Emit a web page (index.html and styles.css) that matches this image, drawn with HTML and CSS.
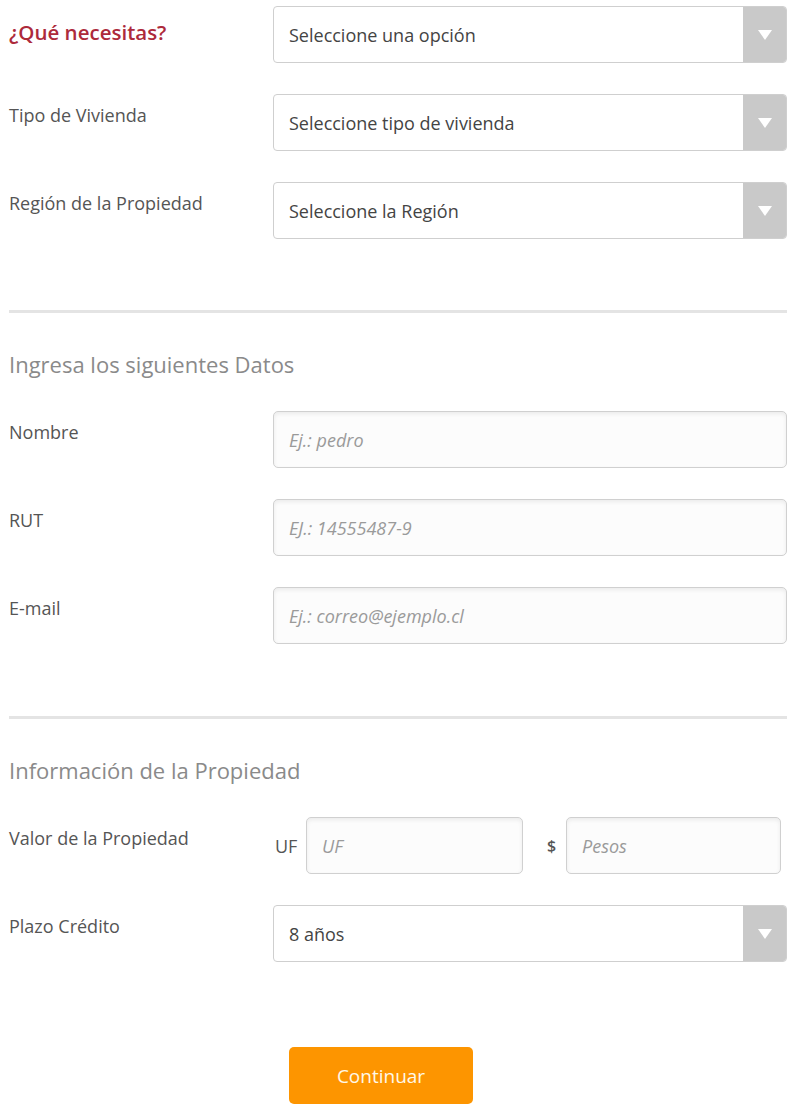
FILE: index.html
```html
<!DOCTYPE html>
<html lang="es">
<head>
<meta charset="utf-8">
<title>Formulario</title>
<link rel="stylesheet" href="styles.css">
</head>
<body>
<form class="form">
  <div class="row first">
    <label class="lbl lbl-red">¿Qué necesitas?</label>
    <div class="select"><span class="select-text">Seleccione una opción</span><span class="select-btn"><svg width="14" height="10" viewBox="0 0 14 10"><path d="M0 0H14L7 10Z" fill="#fff"/></svg></span></div>
  </div>
  <div class="row">
    <label class="lbl">Tipo de Vivienda</label>
    <div class="select"><span class="select-text">Seleccione tipo de vivienda</span><span class="select-btn"><svg width="14" height="10" viewBox="0 0 14 10"><path d="M0 0H14L7 10Z" fill="#fff"/></svg></span></div>
  </div>
  <div class="row">
    <label class="lbl">Región de la Propiedad</label>
    <div class="select"><span class="select-text">Seleccione la Región</span><span class="select-btn"><svg width="14" height="10" viewBox="0 0 14 10"><path d="M0 0H14L7 10Z" fill="#fff"/></svg></span></div>
  </div>

  <hr class="sep">
  <h2 class="heading">Ingresa los siguientes Datos</h2>

  <div class="row">
    <label class="lbl">Nombre</label>
    <div class="input"><span class="ph">Ej.: pedro</span></div>
  </div>
  <div class="row">
    <label class="lbl">RUT</label>
    <div class="input"><span class="ph">EJ.: 14555487-9</span></div>
  </div>
  <div class="row">
    <label class="lbl">E-mail</label>
    <div class="input"><span class="ph">Ej.: correo@ejemplo.cl</span></div>
  </div>

  <hr class="sep sep2">
  <h2 class="heading">Información de la Propiedad</h2>

  <div class="row">
    <label class="lbl">Valor de la Propiedad</label>
    <div class="pair">
      <span class="unit unit-uf">UF</span>
      <div class="input input-uf"><span class="ph">UF</span></div>
      <span class="unit unit-peso">$</span>
      <div class="input input-peso"><span class="ph">Pesos</span></div>
    </div>
  </div>
  <div class="row">
    <label class="lbl">Plazo Crédito</label>
    <div class="select"><span class="select-text">8 años</span><span class="select-btn"><svg width="14" height="10" viewBox="0 0 14 10"><path d="M0 0H14L7 10Z" fill="#fff"/></svg></span></div>
  </div>

  <div class="actions">
    <button type="button" class="btn">Continuar</button>
  </div>
</form>
</body>
</html>
```

FILE: styles.css
```css
* { box-sizing: border-box; }
html, body { margin: 0; padding: 0; background: #fff; }
body {
  font-family: "Open Sans", "Noto Sans", sans-serif;
  font-size: 18px;
  color: #555;
}
.form {
  width: 778px;
  margin-left: 9px;
  padding-top: 6px;
}
.row {
  display: flex;
  align-items: flex-start;
  height: 57px;
  margin-bottom: 31px;
}
.lbl {
  width: 264px;
  flex: none;
  padding-top: 9px;
  line-height: 24px;
  font-size: 18px;
  color: #555;
}
.lbl-red {
  color: #ad2a3b;
  font-weight: 600;
  font-size: 20.5px;
  padding-top: 14px;
}
.select {
  flex: 1;
  height: 57px;
  display: flex;
  align-items: stretch;
  border: 1px solid #cfcfcf;
  border-radius: 4px;
  overflow: hidden;
  background: #fff;
}
.select-text {
  flex: 1;
  display: flex;
  align-items: center;
  padding-left: 15px;
  font-size: 18px;
  color: #444;
}
.select-btn {
  width: 43px;
  flex: none;
  background: #c9c9c9;
  display: flex;
  align-items: center;
  justify-content: center;
}
.input {
  flex: 1;
  height: 57px;
  display: flex;
  align-items: center;
  padding-left: 15px;
  border: 1px solid #d0d0d0;
  border-radius: 5px;
  background: #fcfcfc;
  box-shadow: inset 0 2px 4px rgba(0,0,0,0.07);
}
.ph {
  font-style: italic;
  color: #9a9a9a;
  font-size: 18px;
}
.sep {
  border: 0;
  height: 3px;
  background: #e4e4e4;
  margin: 71px 0 0 0;
}
.sep2 { margin-top: 72px; }
.heading {
  margin: 36px 0 32px 0;
  font-weight: 400;
  font-size: 22px;
  line-height: 30px;
  color: #8a8a8a;
}
.pair {
  flex: 1;
  display: flex;
  align-items: center;
  height: 57px;
}
.unit {
  color: #555;
  font-size: 18px;
}
.unit-uf { margin-left: 2px; width: 31px; }
.unit-peso { margin-left: 24px; width: 19px; font-weight: 600; font-size: 16px; }
.input-uf { flex: none; width: 217px; }
.input-peso { flex: none; width: 215px; }
.actions {
  padding-left: 280px;
  padding-top: 54px;
}
.btn {
  width: 184px;
  height: 57px;
  border: 0;
  border-radius: 5px;
  background: #fd9500;
  color: #fff8e8;
  font-family: "Open Sans", "Noto Sans", sans-serif;
  font-size: 19px;
  cursor: pointer;
}
```
